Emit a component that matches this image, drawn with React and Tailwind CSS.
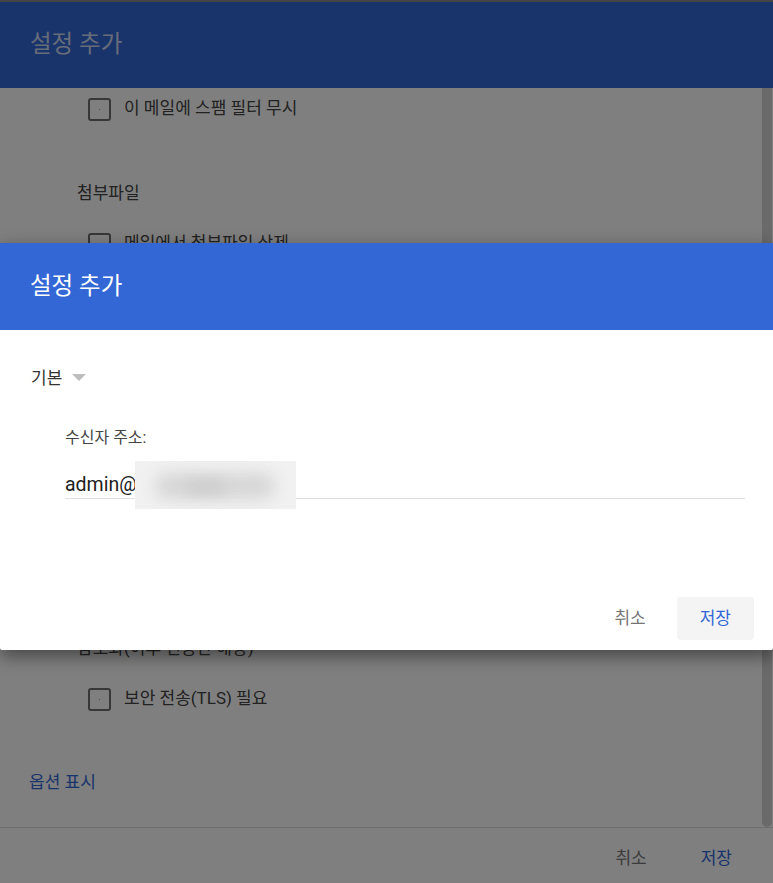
import React from 'react';

const font = { fontFamily: 'Roboto, "Noto Sans CJK KR", "Noto Sans", sans-serif' };

function Checkbox() {
  return (
    <span className="flex h-[23px] w-[23px] items-center justify-center rounded-[3px] border-2 border-[#6f6f6f]">
      <span className="h-px w-px bg-[#999]" />
    </span>
  );
}

function CheckRow({ label, className = '' }) {
  return (
    <div className={`flex h-6 items-center gap-[13px] pl-[88px] ${className}`}>
      <Checkbox />
      <span className="text-[17px] text-[#444]">{label}</span>
    </div>
  );
}

function BackgroundPage() {
  return (
    <div className="flex h-[883px] flex-col bg-white">
      <div className="h-[2px] bg-[#888]" />
      <header className="flex h-[86px] items-center bg-[#3367d6] px-[30px]">
        <h1 className="text-[23.5px] text-white/75">설정 추가</h1>
      </header>

      <div className="flex min-h-0 flex-1">
        <main className="flex-1">
          <CheckRow label="이 메일에 스팸 필터 무시" className="mt-[9px]" />
          <div className="mt-[60px] h-6 pl-[77px] text-[17px] leading-6 text-[#444]">첨부파일</div>
          <CheckRow label="메일에서 첨부파일 삭제" className="mt-[27px]" />
          <div className="mt-[380px] h-6 pl-[77px] text-[17px] leading-6 text-[#444]">
            암호화(이후 전송만 해당)
          </div>
          <CheckRow label="보안 전송(TLS) 필요" className="mt-[27px]" />
          <div className="mt-[59px] h-6 pl-[29px] text-[17px] leading-6 text-[#3367d6]">옵션 표시</div>
        </main>
        <div className="flex w-[11px] pr-px">
          <div className="w-[10px] rounded-b-[5px] bg-[#d4d4d4]" />
        </div>
      </div>

      <div className="h-px bg-[#dcdcdc]" />
      <footer className="flex h-[55px] items-center justify-end gap-[54px] pr-[41px] pt-[6px] text-[17px]">
        <span className="text-[#777]">취소</span>
        <span className="text-[#3367d6]">저장</span>
      </footer>
    </div>
  );
}

function BlurredAddress() {
  return (
    <div className="relative h-[48px] w-[161px] overflow-hidden bg-[#f1f1f1]">
      <div className="absolute left-[20px] top-[12px] h-[26px] w-[120px] rounded-full bg-[#d6d6d6] blur-[8px]" />
      <div className="absolute left-[50px] top-[18px] h-[16px] w-[40px] rounded-full bg-[#cfcfcf] blur-[6px]" />
    </div>
  );
}

function Dialog() {
  return (
    <div className="absolute left-0 right-0 top-[243px] flex h-[407px] flex-col overflow-hidden rounded-b-[2px] bg-white shadow-[0_6px_18px_rgba(0,0,0,0.45)]">
      <div className="flex h-[87px] items-center bg-[#3367d6] px-[30px]">
        <h2 className="text-[23.5px] text-white">설정 추가</h2>
      </div>

      <div className="flex flex-1 flex-col px-[31px] pt-[37px]">
        <div className="flex h-[24px] items-center gap-[10px]">
          <span className="text-[17px] text-[#333]">기본</span>
          <svg width="14" height="7" viewBox="0 0 14 7" className="-mt-[4px]">
            <path d="M0 0 L14 0 L7 7 Z" fill="#bdbdbd" />
          </svg>
        </div>

        <div className="ml-[34px] mt-[36px] flex flex-col">
          <label className="text-[16px] leading-[22px] text-[#444]">수신자 주소:</label>
          <div className="mr-[-3px] mt-[22px] flex h-[28px] items-center border-b border-[#e0e0e0]">
            <span className="text-[19.5px] text-[#212121]">admin@</span>
            <div className="-mb-[11px] -ml-[2px] self-end">
              <BlurredAddress />
            </div>
          </div>
        </div>

        <div className="mb-[10px] mr-[-12px] mt-auto flex items-center justify-end gap-[31px]">
          <span className="text-[17px] text-[#757575]">취소</span>
          <button className="h-[43px] rounded-[4px] bg-[#f4f4f4] px-[23px] text-[17px] text-[#3367d6]">
            저장
          </button>
        </div>
      </div>
    </div>
  );
}

export default function App() {
  return (
    <div className="relative h-[883px] w-full overflow-hidden" style={font}>
      <BackgroundPage />
      <div className="absolute inset-0 bg-black/50" />
      <Dialog />
    </div>
  );
}
